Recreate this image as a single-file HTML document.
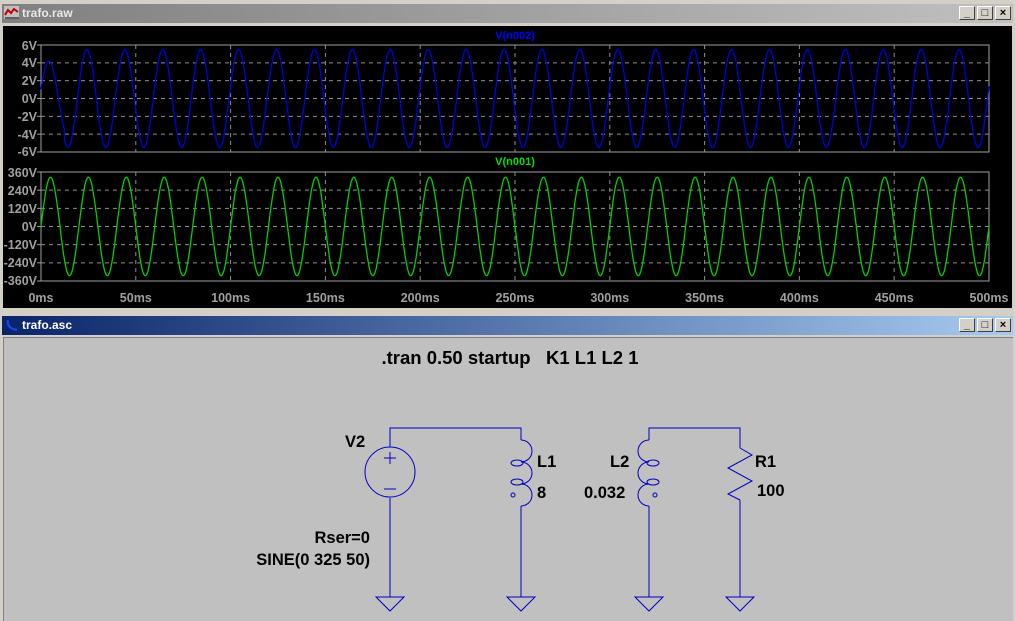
<!DOCTYPE html>
<html><head><meta charset="utf-8"><style>
body{margin:0;width:1015px;height:620px;background:#d4d0c8;position:relative;overflow:hidden;font-family:"Liberation Sans",sans-serif}
.t{position:absolute;left:2px;right:2px;height:19px;font:bold 12px "Liberation Sans",sans-serif;color:#e8e8e8;line-height:19px;padding-left:20px;box-sizing:border-box}
.btn{position:absolute;top:2px;width:16px;height:14px;background:#d4d0c8;border:1px solid;border-color:#fff #404040 #404040 #fff;box-sizing:border-box;font:bold 11px "Liberation Sans";color:#000;text-align:center;line-height:12px}
</style></head><body>
<div class="t" style="top:4px;background:linear-gradient(90deg,#808080,#c0c0c0);">trafo.raw
<svg width="16" height="14" style="position:absolute;left:2px;top:2px"><rect x="0" y="0" width="15" height="13" fill="#c0c0c0"/><path d="M1 9L4 4L7 7L10 3L14 6" stroke="#c00000" stroke-width="2" fill="none"/><path d="M1 12h14" stroke="#000"/></svg>
<div class="btn" style="right:38px">_</div><div class="btn" style="right:20px">□</div><div class="btn" style="right:2px">×</div></div>
<div style="position:absolute;left:3px;top:26px;width:1009px;height:282px;background:#000"></div>
<div class="t" style="top:316px;background:linear-gradient(90deg,#0a246a,#a6caf0);color:#fff">trafo.asc
<svg width="14" height="14" style="position:absolute;left:3px;top:2px"><path d="M3 2C2 8 6 11 12 12" stroke="#2040ff" stroke-width="2" fill="none"/></svg>
<div class="btn" style="right:38px">_</div><div class="btn" style="right:20px">□</div><div class="btn" style="right:2px">×</div></div>
<div style="position:absolute;left:3px;top:337px;width:1009px;height:283px;background:#c0c0c0;border-top:1px solid #808080;border-left:1px solid #808080"></div>
<svg id="s" width="1015" height="620" style="position:absolute;left:0;top:0" font-family="Liberation Sans" font-weight="bold">
<g fill="#a0a0a0" font-size="12.5" text-anchor="end">
<text x="37" y="50">6V</text><text x="37" y="67">4V</text><text x="37" y="85">2V</text><text x="37" y="103">0V</text><text x="37" y="121">-2V</text><text x="37" y="139">-4V</text><text x="37" y="156">-6V</text>
<text x="37" y="177">360V</text><text x="37" y="195">240V</text><text x="37" y="213">120V</text><text x="37" y="231">0V</text><text x="37" y="249">-120V</text><text x="37" y="267">-240V</text><text x="37" y="285">-360V</text>
</g>
<g id="xl" fill="#a0a0a0" font-size="12.5" text-anchor="middle"></g>
<text x="515" y="39" fill="#0000ff" font-size="11" text-anchor="middle">V(n002)</text>
<text x="515" y="165" fill="#00e000" font-size="11" text-anchor="middle">V(n001)</text>
<g id="grid"></g>
<path id="p1" fill="none" stroke="#0000e0" stroke-width="1.3"/>
<path id="p2" fill="none" stroke="#00d000" stroke-width="1.3"/>
<g font-size="16.5" fill="#000">
<text x="510" y="364" text-anchor="middle" font-size="18.5" xml:space="preserve">.tran 0.50 startup   K1 L1 L2 1</text>
<text x="345" y="447">V2</text><text x="537" y="467">L1</text><text x="537" y="498">8</text>
<text x="610" y="467">L2</text><text x="584" y="498">0.032</text><text x="755" y="467">R1</text><text x="757" y="496">100</text>
<text x="370" y="543" text-anchor="end">Rser=0</text><text x="370" y="565" text-anchor="end">SINE(0 325 50)</text>
</g>
<g fill="none" stroke="#0000c0" stroke-width="1">
<path d="M390 447V428H521V440M390 498V597M521 506V597M649 440V428H740V448M649 506V597M740 500V597"/>
<circle cx="390" cy="472" r="25"/><path d="M390 452v12M384 458h12M384 489h12"/>
<path d="M521 440a11 11 0 0 1 0 22a11 11 0 0 1 0 22a11 11 0 0 1 0 22"/>
<path d="M649 440a11 11 0 0 0 0 22a11 11 0 0 0 0 22a11 11 0 0 0 0 22"/>
<ellipse cx="517" cy="463" rx="6" ry="3"/><ellipse cx="517" cy="482" rx="6" ry="3"/><circle cx="513" cy="495" r="2"/>
<ellipse cx="653" cy="463" rx="6" ry="3"/><ellipse cx="653" cy="482" rx="6" ry="3"/><circle cx="655" cy="495" r="2"/>
<path d="M740 448L752 455L728 468L752 481L728 494L740 500"/>
<path d="M376 597h28l-14 14zM507 597h28l-14 14zM635 597h28l-14 14zM726 597h28l-14 14z"/>
</g>
</svg>
<script>
var ns="http://www.w3.org/2000/svg",g=document.getElementById('grid'),xl=document.getElementById('xl');
function el(t,a,p){var e=document.createElementNS(ns,t);for(var k in a)e.setAttribute(k,a[k]);p.appendChild(e);return e}
var x0=41,x1=989,W=x1-x0;
[[45,152],[172,281]].forEach(function(r){
 el('rect',{x:x0,y:r[0],width:W,height:r[1]-r[0],fill:'none',stroke:'#a0a0a0'},g);
 for(var i=1;i<10;i++)el('line',{x1:x0+W*i/10,x2:x0+W*i/10,y1:r[0],y2:r[1],stroke:'#909090','stroke-dasharray':'4,4'},g);
 for(var j=1;j<6;j++){var y=r[0]+(r[1]-r[0])*j/6;el('line',{x1:x0,x2:x1,y1:y,y2:y,stroke:'#909090','stroke-dasharray':'4,4'},g);}
 for(var j=0;j<=6;j++){var y=r[0]+(r[1]-r[0])*j/6;el('line',{x1:x0-4,x2:x0,y1:y,y2:y,stroke:'#a0a0a0'},g);}
});
for(var i=0;i<=10;i++){var t=el('text',{x:x0+W*i/10,y:302},xl);t.textContent=(i*50)+'ms';}
var d1='',d2='';
for(var k=0;k<=1600;k++){var x=x0+W*k/1600,ph=2*Math.PI*25*k/1600;
 var a=k<40?4.2:5.5;var y1=98.5-Math.sin(ph+0.25)*a*8.9;
 var y2=226.5-Math.sin(ph)*325/360*54.5;
 d1+=(k?'L':'M')+x.toFixed(1)+' '+y1.toFixed(1);d2+=(k?'L':'M')+x.toFixed(1)+' '+y2.toFixed(1);}
document.getElementById('p1').setAttribute('d',d1);document.getElementById('p2').setAttribute('d',d2);
</script>
</body></html>
